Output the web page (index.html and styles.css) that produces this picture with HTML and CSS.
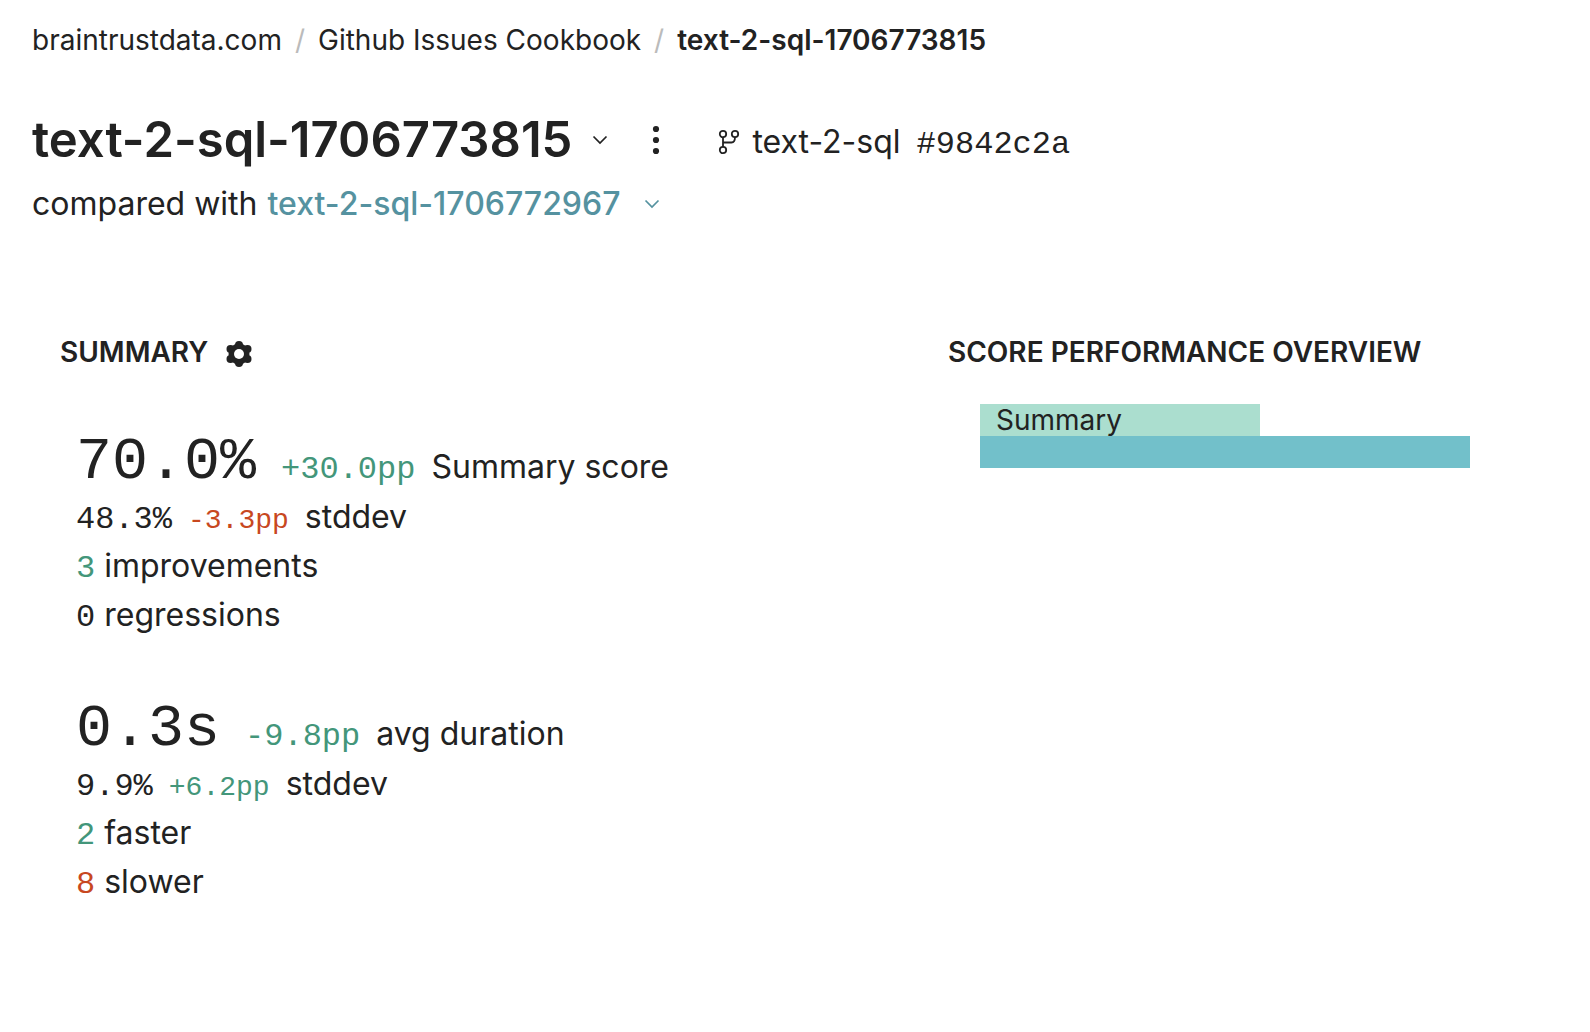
FILE: index.html
```html
<!DOCTYPE html>
<html lang="en">
<head>
<meta charset="utf-8">
<title>text-2-sql-1706773815</title>
<link rel="stylesheet" href="styles.css">
</head>
<body>
<header class="header">
  <nav class="breadcrumb" aria-label="Breadcrumb">
    <a href="#">braintrustdata.com</a>
    <span class="separator">/</span>
    <a href="#">Github Issues Cookbook</a>
    <span class="separator">/</span>
    <a class="current" href="#" aria-current="page">text-2-sql-1706773815</a>
  </nav>
  <div class="title-row">
    <h1 class="title">text-2-sql-1706773815</h1>
    <button class="icon-button" type="button" aria-label="Choose experiment">
      <svg width="16" height="10" viewBox="0 0 16 10"><path d="M1.500 1.500l6.500 6.500 6.500-6.500" fill="none" stroke="currentColor" stroke-width="1.700"/></svg>
    </button>
    <button class="icon-button menu-button" type="button" aria-label="More actions">
      <svg width="8" height="30" viewBox="0 0 8 30" fill="currentColor"><circle cx="4" cy="4" r="3.1"/><circle cx="4" cy="15" r="3.1"/><circle cx="4" cy="26" r="3.1"/></svg>
    </button>
    <div class="branch">
      <svg width="22" height="28" viewBox="0 -2 22 28" fill="none" stroke="currentColor" stroke-width="1.8"><circle cx="5" cy="5" r="3.200"/><circle cx="17" cy="5" r="3.200"/><circle cx="5" cy="21" r="3.200"/><path d="M5 8v10M5 13.500h8.500q3.500 0 3.500-5.500"/></svg>
      <div class="branch-text">
        <span>text-2-sql</span>
        <span class="value">#9842c2a</span>
      </div>
    </div>
  </div>
  <div class="compare">
    <span>compared with</span>
    <button class="compare-button" type="button">text-2-sql-1706772967
      <svg width="16" height="10" viewBox="0 0 16 10"><path d="M1.500 1.500l6.500 6.500 6.500-6.500" fill="none" stroke="currentColor" stroke-width="1.700"/></svg>
    </button>
  </div>
</header>
<main class="content">
  <section class="summary">
    <div class="section-head">
      <h2 class="section-title">SUMMARY</h2>
      <button class="icon-button" type="button" aria-label="Summary settings">
        <svg width="26" height="30" viewBox="-13 -17 26 30"><g fill="currentColor"><circle r="10.500"/><circle cy="-9" r="4"/><circle cy="9" r="4"/><circle cx="8.500" cy="-5" r="4"/><circle cx="8.500" cy="5" r="4"/><circle cx="-8.500" cy="-5" r="4"/><circle cx="-8.500" cy="5" r="4"/></g><circle r="5" fill="#fff"/></svg>
      </button>
    </div>
    <div class="metrics">
      <div class="metric">
        <div class="lead"><span class="figure">70.0%</span><span class="value good">+30.0pp</span><span>Summary score</span></div>
        <div class="row"><span class="value">48.3%</span><span class="value delta bad">-3.3pp</span><span>stddev</span></div>
        <div class="count"><span class="value good">3</span><span>improvements</span></div>
        <div class="count"><span class="value">0</span><span>regressions</span></div>
      </div>
      <div class="metric">
        <div class="lead"><span class="figure">0.3s</span><span class="value good">-9.8pp</span><span>avg duration</span></div>
        <div class="row"><span class="value">9.9%</span><span class="value delta good">+6.2pp</span><span>stddev</span></div>
        <div class="count"><span class="value good">2</span><span>faster</span></div>
        <div class="count"><span class="value bad">8</span><span>slower</span></div>
      </div>
    </div>
  </section>
  <section class="overview">
    <h2 class="section-title">SCORE PERFORMANCE OVERVIEW</h2>
    <div class="chart">
      <div class="bar bar-previous" style="width: 57.14%">Summary</div>
      <div class="bar bar-current" style="width: 100%"></div>
    </div>
  </section>
</main>
</body>
</html>
```

FILE: styles.css
```css
* {
  box-sizing: border-box;
}

body {
  margin: 0;
  background: #fff;
  color: #222;
  font-family: Inter, "Liberation Sans", sans-serif;
  font-size: 32px;
  line-height: 49px;
}

svg {
  display: block;
  flex: none;
}

a {
  color: inherit;
  text-decoration: none;
}

h1,
h2 {
  margin: 0;
  font-weight: 600;
}

button {
  padding: 0;
  border: 0;
  background: none;
  color: inherit;
  font: inherit;
  cursor: pointer;
}

.header {
  padding: 20px 32px 0;
}

.breadcrumb {
  display: flex;
  gap: 13px;
  font-size: 28px;
  line-height: 40px;
}

.separator {
  color: #bbb;
}

.current {
  font-weight: 600;
}

.title-row {
  display: flex;
  align-items: center;
  margin-top: 52px;
}

.title {
  margin-right: 20px;
  font-size: 49px;
  line-height: 56px;
}

.menu-button {
  margin-left: 44px;
}

.branch {
  display: flex;
  align-items: center;
  gap: 12px;
  margin-left: 58px;
  padding-top: 2px;
}

.branch-text {
  display: flex;
  align-items: baseline;
  gap: 16px;
}

.compare {
  display: flex;
  gap: 10px;
  margin-top: 11px;
}

.compare-button {
  display: flex;
  align-items: center;
  gap: 24px;
  color: #5592a0;
  font-weight: 500;
}

.content {
  display: grid;
  grid-template-columns: 888fr 582fr;
  padding: 104px 60px 60px;
}

.section-head {
  display: flex;
  align-items: center;
  gap: 18px;
}

.section-title {
  font-size: 28px;
  line-height: 40px;
}

.metrics {
  display: flex;
  flex-direction: column;
  gap: 60px;
  padding: 60px 16px 0;
}

.lead,
.row,
.count {
  display: flex;
  align-items: baseline;
  gap: 16px;
}

.count {
  gap: 9px;
}

.figure,
.value {
  font-family: "Liberation Mono", monospace;
  line-height: 40px;
}

.figure {
  margin-right: 9px;
  font-size: 60px;
  line-height: 60px;
}

.delta {
  font-size: 28px;
}

.good {
  color: #43967a;
}

.bad {
  color: #c8481f;
}

.chart {
  padding: 32px 60px 0 32px;
}

.bar {
  height: 32px;
  padding-left: 16px;
  font-size: 28px;
  line-height: 32px;
}

.bar-previous {
  background: #abdecf;
}

.bar-current {
  background: #72c0ca;
}
```
